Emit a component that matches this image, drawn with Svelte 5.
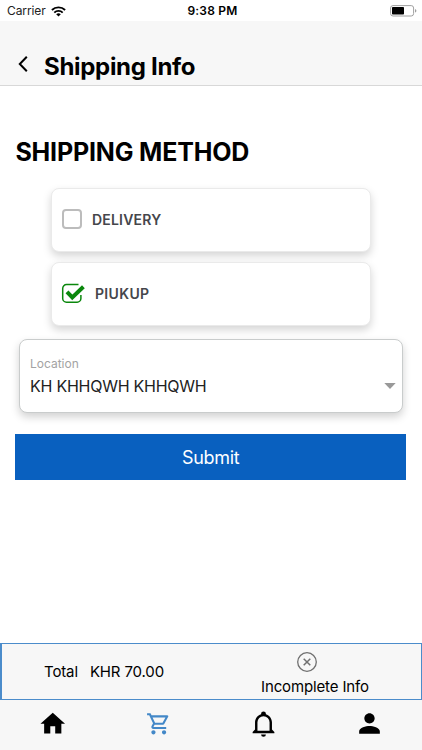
<script>
  const methods = [
    { label: 'DELIVERY', checked: false },
    { label: 'PIUKUP', checked: true }
  ];
</script>

<div class="screen">
  <div class="status">
    <span class="carrier">Carrier</span>
    <svg class="wifi" width="15" height="11" viewBox="0 0 15 11">
      <g fill="none" stroke="#000" stroke-width="1.9">
        <path d="M.9 4a9.5 9.5 0 0 1 13.2 0" />
        <path d="M3.3 6.6a6 6 0 0 1 8.4 0" />
      </g>
      <path d="M7.5 10.5 5.2 8.2a3.4 3.4 0 0 1 4.6 0z" />
    </svg>
    <span class="time">9:38 PM</span>
    <svg class="battery" width="27" height="12" viewBox="0 0 27 12">
      <rect x=".6" y=".6" width="23" height="10.4" rx="2.4" fill="#fff" stroke="#a0a0a0" />
      <rect x="2" y="2" width="12" height="7.6" rx=".8" />
      <path d="M25 4v3.6q1.4-.4 1.4-1.8T25 4" fill="#a0a0a0" />
    </svg>
  </div>

  <header>
    <svg width="12" height="18" viewBox="0 0 12 18"><path d="M10.8 1.8 3.8 9l7 7.2" fill="none" stroke="#000" stroke-width="2" /></svg>
    <h1>Shipping Info</h1>
  </header>

  <main>
    <h2>SHIPPING METHOD</h2>
    <div class="methods">
      {#each methods as m}
        <div class="card">
          {#if m.checked}
            <svg width="25" height="24" viewBox="0 0 25 24">
              <path d="M17.5 2.6H5.5a3.8 3.8 0 0 0-3.8 3.8v10a3.8 3.8 0 0 0 3.8 3.8h10.6a3.8 3.8 0 0 0 3.8-3.8v-3.5" fill="none" stroke="#0a870c" stroke-width="1.5" />
              <path d="m6 9.8 5.3 5.6L22.4 4.8" fill="none" stroke="#0a870c" stroke-width="4" />
            </svg>
          {:else}
            <span class="box"></span>
          {/if}
          <span class="label" class:on={m.checked}>{m.label}</span>
        </div>
      {/each}
    </div>

    <div class="select">
      <div class="field">
        <span class="caption">Location</span>
        <span class="value">KH KHHQWH KHHQWH</span>
      </div>
      <svg width="12" height="6" viewBox="0 0 12 6"><path d="M.3 0h11.4L6 6z" fill="#999" /></svg>
    </div>

    <button>Submit</button>
  </main>

  <div class="summary">
    <div class="total"><span>Total</span><span class="amount">KHR 70.00</span></div>
    <div class="state">
      <svg width="22" height="22" viewBox="0 0 22 22" fill="none" stroke="#707070">
        <circle cx="11" cy="11" r="9.3" stroke-width="1.3" />
        <path d="m7.7 7.7 6.6 6.6m0-6.6-6.6 6.6" stroke-width="1.5" />
      </svg>
      <span>Incomplete Info</span>
    </div>
  </div>

  <nav>
    <div><svg width="29.5" height="29.5" viewBox="0 0 24 24"><path d="M10 20v-6h4v6h5v-8h3L12 3 2 12h3v8z" /></svg></div>
    <div><svg width="25.5" height="25.5" viewBox="0 0 24 24" fill="#4388c8"><path d="M15.55 13c.75 0 1.41-.41 1.75-1.03l3.58-6.49A.996.996 0 0 0 20.01 4H5.21l-.94-2H1v2h2l3.6 7.59-1.35 2.44C4.52 15.37 5.48 17 7 17h12v-2H7l1.1-2h7.45zM6.16 6h12.15l-2.76 5H8.53L6.16 6zM7 18c-1.1 0-1.99.9-1.99 2S5.9 22 7 22s2-.9 2-2-.9-2-2-2zm10 0c-1.1 0-1.99.9-1.99 2s.89 2 1.99 2 2-.9 2-2-.9-2-2-2z" /></svg></div>
    <div><svg width="29" height="29" viewBox="0 0 24 24"><path d="M10 21h4a2 2 0 0 1-4 0M21 19v1H3v-1l2-2v-6c0-3.1 2.03-5.83 5-6.71V4a2 2 0 0 1 4 0v.29c2.97.88 5 3.61 5 6.71v6l2 2M17 11a5 5 0 0 0-10 0v7h10z" /></svg></div>
    <div><svg width="31" height="31" viewBox="0 0 24 24"><path d="M12 12c2.21 0 4-1.79 4-4s-1.79-4-4-4-4 1.79-4 4 1.79 4 4 4zm0 2c-2.67 0-8 1.34-8 4v2h16v-2c0-2.66-5.33-4-8-4z" /></svg></div>
  </nav>
</div>

<style>
  .screen {
    width: 422px; height: 750px; box-sizing: border-box; overflow: hidden;
    display: flex; flex-direction: column; background: #fff; color: #000;
    font-family: Inter, "Liberation Sans", sans-serif; white-space: nowrap;
  }
  svg { display: block; flex: none; }
  .status { height: 21px; flex: none; display: grid; grid-template-columns: 44px 1fr 1fr 27px; align-items: center; padding: 0 5px 0 7px; position: relative; }
  .carrier { font-size: 12px; letter-spacing: -.1px; color: #222; line-height: 22px; }
  .time { position: absolute; left: 3px; right: 0; top: 0; line-height: 22px; text-align: center; font-size: 12px; font-weight: 600; letter-spacing: .2px; }
  .battery { grid-column: 4; }
  header { height: 65px; flex: none; box-sizing: border-box; background: #f7f7f7; border-bottom: 1px solid #d8d8d8; display: flex; align-items: flex-start; padding: 31px 17px 0 16px; }
  header svg { margin-top: 3px; }
  h1 { margin: 0 0 0 16px; font-size: 24px; line-height: 30px; font-weight: 700; letter-spacing: -.3px; }
  main { flex: 1; display: flex; flex-direction: column; padding: 51px 16px 0 15.4px; }
  h2 { margin: 0; font-size: 25px; line-height: 31px; font-weight: 700; letter-spacing: -.17px; }
  .methods { display: flex; flex-direction: column; gap: 10.5px; margin: 20px 35px 0 35.6px; }
  .card { height: 63.5px; box-sizing: border-box; display: flex; align-items: center; padding-left: 10px; border: 1px solid #eaeaea; border-radius: 8px; background: #fff; box-shadow: 0 4px 8px rgba(0,0,0,.17); }
  .box { width: 20px; height: 20px; margin-top: -2px; box-sizing: border-box; border: 2px solid #bcbcbc; border-radius: 4px; }
  .card svg { margin-left: -1px; }
  .label { margin-left: 10px; margin-top: -1px; font-size: 14px; font-weight: 600; color: #45464b; letter-spacing: .2px; }
  .label.on { margin-left: 9px; letter-spacing: .35px; }
  .select { margin: 13.5px 3px 0 3.6px; height: 74px; box-sizing: border-box; border: 1px solid #c9cccc; border-radius: 8px; display: flex; align-items: center; justify-content: space-between; padding: 2px 6px 0 10px; background: #fff; box-shadow: 0 4px 8px rgba(0,0,0,.18); }
  .field { display: flex; flex-direction: column; }
  .caption { font-size: 12px; line-height: 18px; color: #a3a3a3; }
  .value { font-size: 16px; line-height: 26px; color: #222; letter-spacing: -.25px; }
  .select svg { margin-top: 17px; }
  button { margin-top: 21px; height: 46px; border: 0; padding: 0; background: #0960bf; color: #fff; font: 18px/47px Inter, sans-serif; letter-spacing: -.3px; }
  .summary { height: 57px; flex: none; box-sizing: border-box; border: 1px solid #4b8ccb; border-left-width: 2px; background: #f7f7f7; display: flex; font-size: 15px; letter-spacing: -.13px; }
  .total { width: 211px; display: flex; align-items: center; padding-left: 42px; box-sizing: border-box; }
  .amount { margin-left: 12px; }
  .state { flex: 1; display: flex; flex-direction: column; align-items: flex-start; padding: 7px 0 0 48px; }
  .state svg { margin-left: 35px; }
  .state span { line-height: 20px; margin-top: 4px; }
  nav { height: 50px; flex: none; background: #f7f7f7; display: grid; grid-template-columns: repeat(4, 1fr); }
  nav div { display: flex; align-items: center; justify-content: center; padding-bottom: 3px; }
</style>
